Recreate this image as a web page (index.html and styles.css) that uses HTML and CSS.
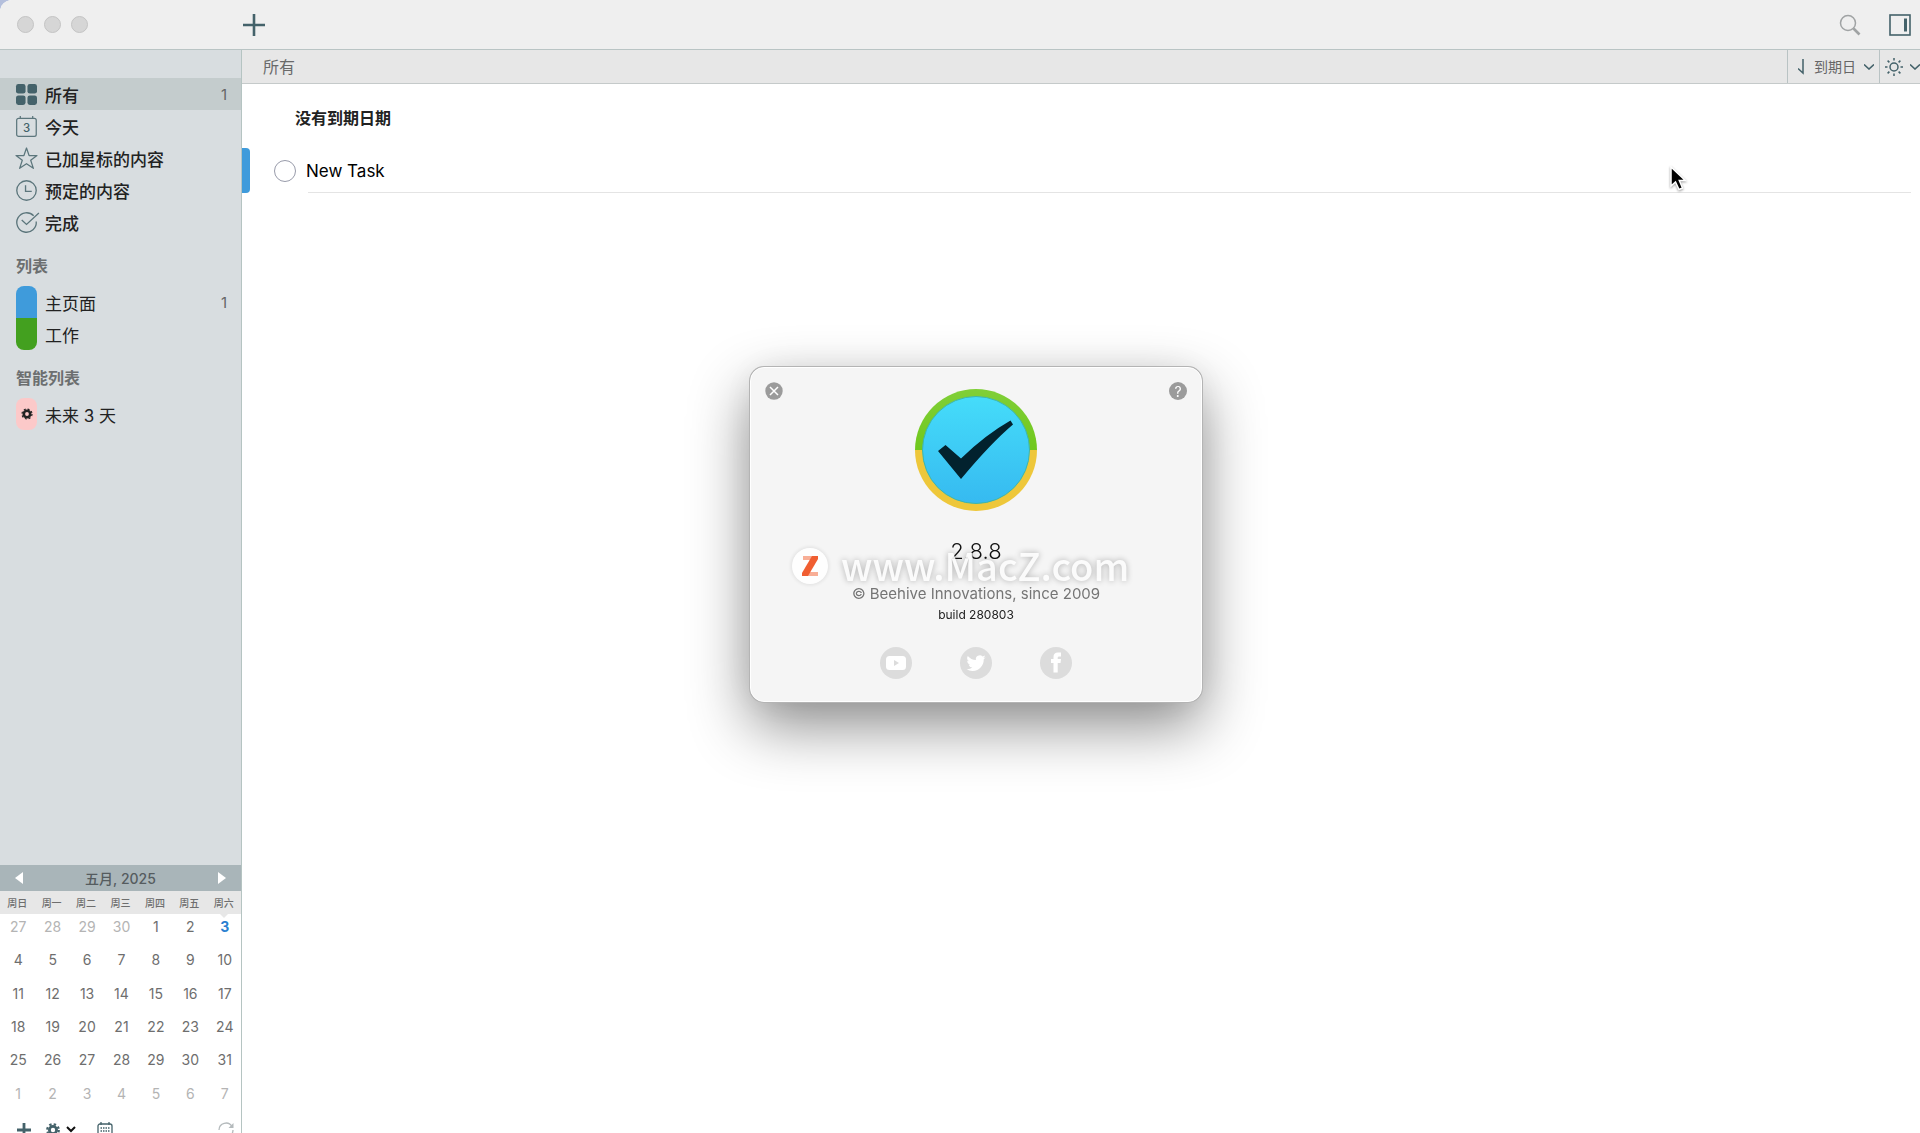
FILE: index.html
```html
<!DOCTYPE html>
<html lang="zh-CN">
<head>
  <meta charset="UTF-8">
  <meta name="viewport" content="width=device-width, initial-scale=1">
  <title>所有</title>
  <link rel="stylesheet" href="styles.css">
</head>
<body>
  <div class="app">
    <header class="titlebar">
      <div class="lights"><i></i><i></i><i></i></div>
      <button class="icon-btn" aria-label="添加">
        <svg width="22" height="22" viewBox="0 0 22 22"><path d="M11 0v22M0 11h22" stroke="#44626a" stroke-width="2.600"/></svg>
      </button>
      <div class="titlebar-right">
        <button class="icon-btn" aria-label="搜索">
          <svg width="22" height="22" viewBox="0 0 22 22" fill="none" stroke="#a0a3a4"><circle cx="9" cy="9" r="7.5" stroke-width="1.5"/><path d="M14.5 14.5l6 6" stroke-width="2.6"/></svg>
        </button>
        <button class="icon-btn" aria-label="侧边栏">
          <svg width="22" height="22" viewBox="0 0 22 22" fill="none" stroke="#44626a"><rect x="1" y="1" width="20" height="20" stroke-width="1.6"/><path d="M16.5 4.5v13" stroke-width="3"/></svg>
        </button>
      </div>
    </header>

    <div class="body">
      <aside class="sidebar">
        <nav class="nav">
          <a href="#" class="nav-row active">
            <svg class="nav-icon" width="21" height="21" viewBox="0 0 22 22" fill="#44626a"><rect x="0" y="0" width="10" height="10" rx="2.5"/><rect x="12" y="0" width="10" height="10" rx="2.5"/><rect x="0" y="12" width="10" height="10" rx="2.5"/><rect x="12" y="12" width="10" height="10" rx="2.5"/></svg>
            <span>所有</span><span class="count">1</span>
          </a>
          <a href="#" class="nav-row">
            <svg class="nav-icon" width="21" height="21" viewBox="0 0 22 22" fill="none" stroke="#5c767c" stroke-width="1.3"><rect x=".7" y="2.5" width="20.5" height="18.8" rx="2"/><path d="M4.5 0v3M17.5 0v3"/><text x="11" y="16.500" text-anchor="middle" class="icon-day">3</text></svg>
            <span>今天</span>
          </a>
          <a href="#" class="nav-row">
            <svg class="nav-icon" width="21" height="21" viewBox="0 0 22 22" fill="none" stroke="#5c767c" stroke-width="1.3" stroke-linejoin="round"><path d="M11 0l2.7 7.9H22l-6.6 5 2.8 8.4-7.2-4.9-7.2 4.9 2.8-8.4L0 7.900h8.300z"/></svg>
            <span>已加星标的内容</span>
          </a>
          <a href="#" class="nav-row">
            <svg class="nav-icon" width="21" height="21" viewBox="0 0 22 22" fill="none" stroke="#5c767c" stroke-width="1.4"><circle cx="11" cy="11" r="10.200"/><path d="M10 5.500V12h6.500"/></svg>
            <span>预定的内容</span>
          </a>
          <a href="#" class="nav-row">
            <svg class="nav-icon" width="21" height="21" viewBox="0 0 22 22" fill="none" stroke="#5c767c" stroke-width="1.4"><path d="M18.500 4A10.200 10.200 0 1 0 21.200 10"/><path d="M6 8.500l5 4.500L24 1"/></svg>
            <span>完成</span>
          </a>
        </nav>

        <h2 class="group-title">列表</h2>
        <nav class="nav lists">
          <a href="#" class="nav-row"><i class="pill blue"></i><span>主页面</span><span class="count">1</span></a>
          <a href="#" class="nav-row"><i class="pill green"></i><span>工作</span></a>
        </nav>

        <h2 class="group-title">智能列表</h2>
        <nav class="nav lists">
          <a href="#" class="nav-row">
            <i class="pill pink"><svg width="12" height="12" viewBox="0 0 12 12" fill="none" stroke="#222"><circle cx="6" cy="6" r="3.200" stroke-width="2.600"/><circle cx="6" cy="6" r="5" stroke-width="1.200" stroke-dasharray="2 1.927"/></svg></i>
            <span>未来 3 天</span>
          </a>
        </nav>

        <section class="calendar">
          <div class="cal-head">
            <button class="icon-btn" aria-label="上个月"><svg width="8" height="12" viewBox="0 0 8 12"><path d="M8 0v12L0 6z" fill="#fff"/></svg></button>
            <span>五月, 2025</span>
            <button class="icon-btn" aria-label="下个月"><svg width="8" height="12" viewBox="0 0 8 12"><path d="M0 0v12l8-6z" fill="#fff"/></svg></button>
          </div>
          <table class="cal-table">
            <thead>
              <tr><th>周日</th><th>周一</th><th>周二</th><th>周三</th><th>周四</th><th>周五</th><th class="today-col">周六</th></tr>
            </thead>
            <tbody>
              <tr><td class="dim">27</td><td class="dim">28</td><td class="dim">29</td><td class="dim">30</td><td>1</td><td>2</td><td class="today">3</td></tr>
              <tr><td>4</td><td>5</td><td>6</td><td>7</td><td>8</td><td>9</td><td>10</td></tr>
              <tr><td>11</td><td>12</td><td>13</td><td>14</td><td>15</td><td>16</td><td>17</td></tr>
              <tr><td>18</td><td>19</td><td>20</td><td>21</td><td>22</td><td>23</td><td>24</td></tr>
              <tr><td>25</td><td>26</td><td>27</td><td>28</td><td>29</td><td>30</td><td>31</td></tr>
              <tr><td class="dim">1</td><td class="dim">2</td><td class="dim">3</td><td class="dim">4</td><td class="dim">5</td><td class="dim">6</td><td class="dim">7</td></tr>
            </tbody>
          </table>
        </section>

        <footer class="side-foot">
          <button class="icon-btn" aria-label="新列表"><svg width="14" height="14" viewBox="0 0 14 14"><path d="M7 0v14M0 7h14" stroke="#44626a" stroke-width="2.800"/></svg></button>
          <button class="icon-btn foot-gear" aria-label="设置">
            <svg width="14" height="14" viewBox="0 0 14 14" fill="none" stroke="#44626a"><circle cx="7" cy="7" r="3.600" stroke-width="2.800"/><circle cx="7" cy="7" r="5.800" stroke-width="2.200" stroke-dasharray="2.400 2.155"/></svg>
            <svg width="10" height="7" viewBox="0 0 10 7" fill="none" stroke="#111" stroke-width="2"><path d="M1 1l4 4 4-4"/></svg>
          </button>
          <button class="icon-btn" aria-label="日历">
            <svg width="16" height="16" viewBox="0 0 16 16" fill="none" stroke="#44626a"><rect x="1" y="2" width="14" height="13" rx="2" stroke-width="1.300"/><path d="M4 0v3M12 0v3" stroke-width="1.300"/><path d="M3.500 6h9M3.500 9h9M3.500 12h9" stroke-width="1.500" stroke-dasharray="1.500 1"/></svg>
          </button>
          <button class="icon-btn foot-sync" aria-label="同步">
            <svg width="16" height="16" viewBox="0 0 16 16" fill="none" stroke="#b4babc" stroke-width="1.300"><path d="M1 8a7 7 0 0 1 13-3.500M15 8a7 7 0 0 1-13 3.500"/><path d="M15.500 1v5h-5z" fill="#b4babc" stroke="none"/></svg>
          </button>
        </footer>
      </aside>

      <main class="main">
        <div class="subbar">
          <h1>所有</h1>
          <label class="sort">
            <svg width="6" height="16" viewBox="0 0 6 16" fill="none" stroke="#44626a" stroke-width="1.500"><path d="M5 0v14L0 9.500"/></svg>
            <select aria-label="排序"><option>到期日</option></select>
            <svg width="10" height="6" viewBox="0 0 10 6" fill="none" stroke="#44626a" stroke-width="1.600"><path d="M0 .5l5 4.500 5-4.500"/></svg>
          </label>
          <button class="icon-btn focus" aria-label="显示">
            <svg width="18" height="18" viewBox="0 0 18 18" fill="none" stroke="#44626a" stroke-width="1.500"><circle cx="9" cy="9" r="4"/><path d="M9 0v2.500M9 15.500V18M0 9h2.500M15.500 9H18M2.600 2.600l1.800 1.800M13.600 13.600l1.800 1.800M2.600 15.400l1.800-1.800M13.600 4.400l1.800-1.800"/></svg>
            <svg width="10" height="6" viewBox="0 0 10 6" fill="none" stroke="#44626a" stroke-width="1.600"><path d="M0 .5l5 4.500 5-4.500"/></svg>
          </button>
        </div>
        <h3 class="section-title">没有到期日期</h3>
        <div class="task">
          <input type="checkbox" id="task1">
          <label for="task1">New Task</label>
        </div>
      </main>
    </div>
  </div>

  <!-- about window -->
  <div class="about" role="dialog" aria-label="关于">
    <div class="about-top">
      <button class="icon-btn" aria-label="关闭"><svg width="18" height="18" viewBox="0 0 18 18"><circle cx="9" cy="9" r="8.700" fill="#9b9b9b"/><path d="M5 5l8 8M13 5l-8 8" stroke="#fff" stroke-width="1.500"/></svg></button>
      <button class="icon-btn help">?</button>
    </div>
    <svg class="logo" width="122" height="122" viewBox="0 0 122 122">
      <defs>
        <linearGradient id="sky" x1="0" y1="0" x2="0" y2="1"><stop offset="0" stop-color="#45dcfa"/><stop offset="1" stop-color="#36baf0"/></linearGradient>
        <linearGradient id="leaf" x1="0" y1="0" x2="0" y2="1"><stop offset="0" stop-color="#80cf38"/><stop offset="1" stop-color="#70c81c"/></linearGradient>
      </defs>
      <path d="M0 61a61 61 0 0 1 122 0z" fill="url(#leaf)"/>
      <path d="M0 61a61 61 0 0 0 122 0z" fill="#eec73a"/>
      <circle cx="61" cy="61" r="53.500" fill="url(#sky)" stroke="#3fb6a8" stroke-width="1"/>
      <path d="M23 62l7.500-6L46 69.500Q70 46 95.500 31.500l2.500 4Q76 54 46 90z" fill="#02222e"/>
    </svg>
    <p class="version">2.8.8</p>
    <p class="copyright">© Beehive Innovations, since 2009</p>
    <p class="build">build 280803</p>
    <div class="social">
      <a href="#" aria-label="YouTube"><svg width="32" height="32" viewBox="0 0 32 32"><circle cx="16" cy="16" r="16" fill="#dcdcdc"/><rect x="6" y="9" width="20" height="14" rx="3.500" fill="#fff"/><path d="M14 13l5 3-5 3z" fill="#dcdcdc"/></svg></a>
      <a href="#" aria-label="Twitter"><svg width="32" height="32" viewBox="0 0 32 32"><circle cx="16" cy="16" r="16" fill="#dcdcdc"/><path transform="translate(6.500 6.500) scale(.8)" fill="#fff" d="M23.950 4.570a10 10 0 0 1-2.820.770 4.960 4.960 0 0 0 2.160-2.720c-.950.550-2 .960-3.130 1.180a4.920 4.920 0 0 0-8.380 4.480C7.690 8.090 4.070 6.130 1.640 3.160a4.900 4.900 0 0 0 1.520 6.570 4.900 4.900 0 0 1-2.230-.610v.060a4.920 4.920 0 0 0 3.950 4.830 5 5 0 0 1-2.210.080 4.940 4.940 0 0 0 4.600 3.420A9.870 9.870 0 0 1 0 19.540a14 14 0 0 0 7.550 2.210c9.050 0 14-7.500 14-13.980 0-.210 0-.420-.020-.630a9.940 9.940 0 0 0 2.420-2.570z"/></svg></a>
      <a href="#" aria-label="Facebook"><svg width="32" height="32" viewBox="0 0 32 32"><circle cx="16" cy="16" r="16" fill="#dcdcdc"/><path d="M13.500 25.500V16h-2.500v-4h2.500V10c0-3 1.500-4.500 4.300-4.500H21V9.500h-1.700c-1.200 0-1.600.5-1.600 1.500v1H21l-.5 4h-2.800v9.500z" fill="#fff"/></svg></a>
    </div>
  </div>

  <div class="watermark">
    <svg width="36" height="36" viewBox="0 0 36 36"><circle cx="18" cy="18" r="18" fill="#fff"/><path d="M11 8h12v4H11zM14 24h12v4H14z" fill="#f9a78c"/><path d="M20 8h6v3L16 28h-6v-3z" fill="#f04e1c"/></svg>
    <span>www.MacZ.com</span>
  </div>

  <svg class="cursor" width="18" height="26" viewBox="0 0 18 26"><path d="M1 1v19l4.500-4 3.500 7.500 3.500-1.500-3.200-7.500h6z" fill="#000" stroke="#fff" stroke-width="1.500"/></svg>
</body>
</html>
```
FILE: styles.css
```css
* { box-sizing: border-box; }
html, body {
  margin: 0; padding: 0;
  height: 100%;
  overflow: hidden;
  background: #b4bfdc;
  font-family: Inter, "Noto Sans CJK SC", sans-serif;
  color: #222;
}
h1, h2, h3, p { margin: 0; }
a { color: inherit; text-decoration: none; }
svg { display: block; flex: none; }
.icon-btn {
  display: flex; align-items: center; justify-content: center;
  background: none; border: none; padding: 0;
  cursor: pointer;
}

/* the window runs a little below the screen edge */
.app {
  display: flex; flex-direction: column;
  height: calc(100vh + 12px);
  background: #fff;
  border-radius: 12px 0 0 0;
  overflow: hidden;
}
.titlebar {
  display: flex; align-items: center;
  height: 50px; flex: none;
  padding: 0 9px 0 17px;
  background: #efefef;
  border-bottom: 1px solid #b9c4c4;
}
.lights { display: flex; gap: 10px; width: 226px; }
.lights i { width: 17px; height: 17px; border-radius: 50%; background: #d6d6d6; border: 1px solid #c4c4c4; }
.titlebar-right { display: flex; gap: 28px; margin-left: auto; }

.body { display: flex; flex: 1; min-height: 0; }

/* sidebar */
.sidebar {
  display: flex; flex-direction: column;
  width: 242px; flex: none;
  padding-top: 28px;
  background: #d8dde0;
  border-right: 1px solid #b5c4c2;
}
.nav-row {
  display: flex; align-items: center; gap: 8px;
  height: 32px;
  padding: 0 14px 0 16px;
  font-size: 17px; font-weight: 500;
}
.nav-row.active { background: #c4cccd; }
.nav-icon { overflow: visible; }
.icon-day { font-size: 12px; fill: #44626a; stroke: none; }
.count { margin-left: auto; font-size: 15px; font-weight: 400; color: #666; }
.group-title { padding-left: 16px; margin: 16px 0 8px; font-size: 16px; line-height: 24px; font-weight: 700; color: #6c6f70; }
.lists .nav-row { font-weight: 400; }
.pill {
  display: flex; align-items: center; justify-content: center;
  width: 21px; height: 32px;
}
.blue { background: #3f9bdb; border-radius: 8px 8px 0 0; }
.green { background: #43a01f; border-radius: 0 0 8px 8px; }
.pink { background: #fcc9c9; border-radius: 8px; }

/* calendar */
.calendar { margin-top: auto; background: #fff; color: #6e6e6e; }
.cal-head {
  display: flex; align-items: center; justify-content: space-between;
  height: 26px; padding: 0 15px;
  background: #a9b5b9;
  font-size: 14px; font-weight: 500; color: #555c5f;
}
.cal-table { width: 100%; height: 223px; table-layout: fixed; border-collapse: collapse; }
.cal-table th { height: 23px; padding: 0; background: #e7e7e7; font-size: 10px; line-height: 22px; font-weight: 500; }
.cal-table td { padding: 0 0 0 2px; vertical-align: top; text-align: center; font-size: 14px; line-height: 26px; }
.cal-table .dim { color: #b4b4b4; }
.cal-table .today { color: #2b7fd0; font-weight: 700; }
.today-col { position: relative; }
.today-col::after {
  content: ""; position: absolute; top: 100%; left: 50%; margin-left: -4px;
  border: 4px solid transparent; border-top-color: #e7e7e7; border-bottom: 0;
}
.side-foot {
  display: flex; align-items: center; gap: 21px;
  height: 31px; flex: none;
  padding: 0 7px 0 17px;
  background: #fff;
}
.foot-gear { gap: 6px; margin-left: -6px; }
.foot-sync { margin-left: auto; }

/* main area */
.main { flex: 1; min-width: 0; }
.subbar {
  display: flex; align-items: stretch;
  height: 34px;
  background: #e7e7e7;
  border-bottom: 1px solid #c5caca;
  overflow: hidden;
}
.subbar h1 { margin-right: auto; padding-left: 21px; font-size: 16px; line-height: 34px; font-weight: 400; color: #6a6a6a; }
.sort {
  display: flex; align-items: center; gap: 8px;
  padding: 0 5px 0 10px;
  border-left: 1px solid #b9c3c4; border-right: 1px solid #b9c3c4;
}
.sort select {
  appearance: none; border: none; background: none; padding: 0; margin: 0 0 0 2px;
  font-family: inherit; font-size: 14px; color: #666;
}
.focus { gap: 7px; width: 40px; padding-left: 5px; justify-content: flex-start; }
.section-title { padding: 22px 0 0 53px; font-size: 16px; line-height: 24px; font-weight: 700; }
.task {
  display: flex; align-items: center; gap: 10px;
  position: relative;
  height: 45px;
  margin-top: 18px;
  padding-left: 32px;
}
.task::before { content: ""; position: absolute; left: 0; top: 0; width: 8px; height: 45px; background: #3f9bdb; border-radius: 0 4px 4px 0; }
.task::after { content: ""; position: absolute; left: 66px; right: 9px; bottom: 0; height: 1px; background: #e4e4e4; }
.task input { appearance: none; width: 22px; height: 22px; margin: 0; border: 1px solid #989baa; border-radius: 50%; background: #fff; }
.task label { font-size: 17px; color: #000; }

/* about window */
.about {
  position: fixed; top: 367px; left: calc(50% - 210px);
  display: flex; flex-direction: column; align-items: center;
  width: 452px;
  padding: 14px 14px 22px;
  background: #f5f5f5;
  border: 1px solid #fff;
  border-radius: 14px;
  box-shadow: 0 0 0 1px #b4b4b4, 0 24px 60px rgba(0, 0, 0, 0.45), 0 0 40px rgba(0, 0, 0, 0.06);
}
.about-top { display: flex; justify-content: space-between; width: 100%; height: 7px; }
.about-top .icon-btn { width: 18px; height: 18px; }
.help { background: #9b9b9b; border-radius: 50%; color: #fff; font-family: inherit; font-size: 14px; }
.version { margin-top: 24px; font-size: 22px; line-height: 32px; font-weight: 300; color: #111; }
.copyright { margin-top: 15px; font-size: 15px; line-height: 24px; color: #757575; }
.build { font-size: 12px; line-height: 18px; color: #222; }
.social { display: flex; gap: 48px; margin-top: 23px; }

.watermark {
  position: fixed; top: 542px; left: calc(50% - 168px);
  display: flex; align-items: center; gap: 13px;
  font-family: "Noto Sans CJK SC", sans-serif;
  font-size: 38px; line-height: 46px; font-weight: 500;
  color: rgba(255, 255, 255, 0.9);
  text-shadow: 0 0 6px rgba(0, 0, 0, 0.3);
  pointer-events: none;
}
.watermark svg { margin-top: 2px; border-radius: 50%; opacity: .9; box-shadow: 0 0 5px rgba(0, 0, 0, 0.15); }
.cursor { position: fixed; top: 166px; left: 1670px; filter: drop-shadow(0 1px 1px rgba(0, 0, 0, 0.4)); }
```
